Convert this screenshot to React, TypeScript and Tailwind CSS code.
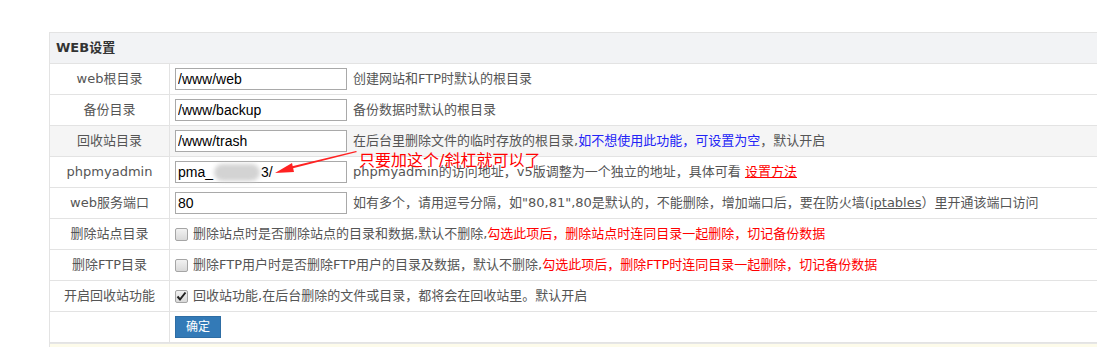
import React from 'react'

const font = { fontFamily: '"DejaVu Sans", "Noto Sans CJK SC", sans-serif' }

function Row({ label, gray, children }: { label: string; gray?: boolean; children: React.ReactNode }) {
  return (
    <div className={`flex h-[31px] border-b border-[#e3e3e3] ${gray ? 'bg-[#f5f5f5]' : ''}`}>
      <div className="flex w-[120px] shrink-0 items-center justify-center border-r border-[#e3e3e3] text-[13px] text-[#555]">
        {label}
      </div>
      <div className="flex flex-1 items-center pl-[5px] text-[13px] text-[#555]">{children}</div>
    </div>
  )
}

function TextBox({ value }: { value: string }) {
  return (
    <input
      readOnly
      value={value}
      className="mr-[6px] h-[22px] w-[172px] border border-[#a9a9a9] bg-white px-[2px] text-[14px] text-black outline-none"
      style={{ fontFamily: '"Liberation Sans", Arial, sans-serif' }}
    />
  )
}

function Check({ checked }: { checked?: boolean }) {
  return (
    <span className="mr-[5px] flex h-[13px] w-[13px] items-center justify-center rounded-[2px] border border-[#a5a5a5] bg-gradient-to-b from-[#f2f2f2] to-[#d9d9d9]">
      {checked && (
        <svg width="11" height="11" viewBox="0 0 11 11">
          <path d="M1.5 5.5 L4 8.5 L9.5 1.5" fill="none" stroke="#222" strokeWidth="2" />
        </svg>
      )}
    </span>
  )
}

export default function App() {
  return (
    <div className="relative h-[347px] w-[1097px] overflow-hidden bg-white pl-[49px] pt-[32px]" style={font}>
      <div className="w-[1100px] border-l border-t border-[#e3e3e3]">
        <div className="flex h-[31px] items-center border-b border-[#e3e3e3] bg-[#f2f3f5] pl-[6px] text-[13px] font-bold text-[#333]">
          WEB设置
        </div>

        <Row label="web根目录">
          <TextBox value="/www/web" />
          创建网站和FTP时默认的根目录
        </Row>
        <Row label="备份目录">
          <TextBox value="/www/backup" />
          备份数据时默认的根目录
        </Row>
        <Row label="回收站目录" gray>
          <TextBox value="/www/trash" />
          在后台里删除文件的临时存放的根目录,<span className="text-[#2323f6]">如不想使用此功能，可设置为空</span>，默认开启
        </Row>
        <Row label="phpmyadmin">
          <div
            className="mr-[6px] flex h-[22px] w-[172px] items-center border border-[#a9a9a9] bg-white px-[2px] text-[14px] text-black"
            style={{ fontFamily: '"Liberation Sans", Arial, sans-serif' }}
          >
            pma_
            <span className="mx-[1px] h-[17px] w-[46px] rounded-full bg-[#d3d3d3] blur-[2px]" />
            3/
          </div>
          phpmyadmin的访问地址，v5版调整为一个独立的地址，具体可看&nbsp;
          <span className="text-[#f00] underline">设置方法</span>
        </Row>
        <Row label="web服务端口">
          <TextBox value="80" />
          如有多个，请用逗号分隔，如"80,81",80是默认的，不能删除，增加端口后，要在防火墙(<span className="underline">iptables</span>
          ）里开通该端口访问
        </Row>
        <Row label="删除站点目录">
          <Check />
          删除站点时是否删除站点的目录和数据,默认不删除,
          <span className="text-[#f00]">勾选此项后，删除站点时连同目录一起删除，切记备份数据</span>
        </Row>
        <Row label="删除FTP目录">
          <Check />
          删除FTP用户时是否删除FTP用户的目录及数据，默认不删除,
          <span className="text-[#f00]">勾选此项后，删除FTP时连同目录一起删除，切记备份数据</span>
        </Row>
        <Row label="开启回收站功能">
          <Check checked />
          回收站功能,在后台删除的文件或目录，都将会在回收站里。默认开启
        </Row>
        <Row label="">
          <button className="h-[22px] w-[46px] border border-[#2e6da4] bg-[#337ab7] text-[12px] text-white">确定</button>
        </Row>
        <div className="h-[6px] border-t border-[#e6e6e6] bg-[#fdfbea]" />
      </div>

      <div className="absolute left-[359px] top-[151px] text-[16px] leading-[20px] text-[#f00]">只要加这个/斜杠就可以了</div>
      <svg className="absolute left-[270px] top-[146px]" width="90" height="32" viewBox="0 0 90 32">
        <polygon points="86,5 87,6 20,23 19,21" fill="#f22" />
        <polygon points="5,27 22,17 24,26" fill="#f22" />
      </svg>
    </div>
  )
}
